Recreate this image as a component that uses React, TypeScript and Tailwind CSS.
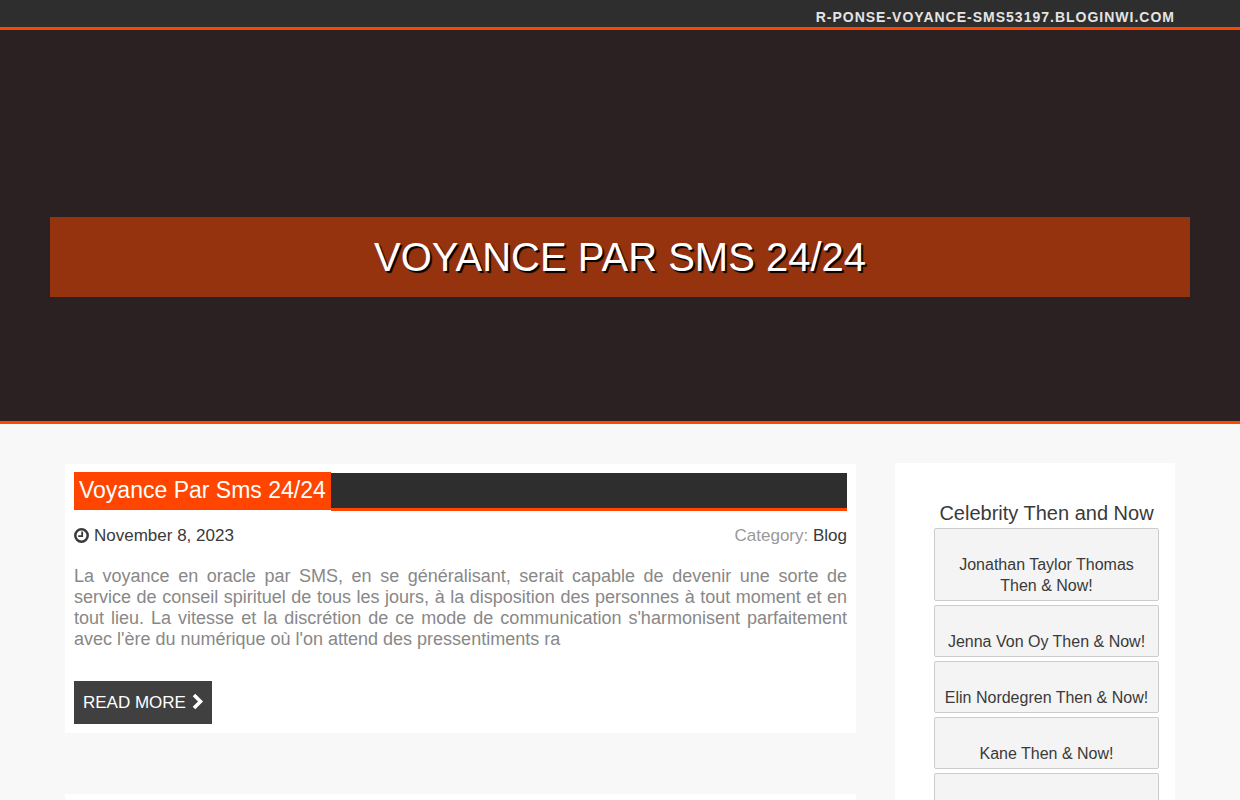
const celebs = [
  { name: "Jonathan Taylor Thomas Then & Now!" },
  { name: "Jenna Von Oy Then & Now!" },
  { name: "Elin Nordegren Then & Now!" },
  { name: "Kane Then & Now!" },
  { name: "" },
]

function CelebCard({ name }: { name: string }) {
  return (
    <div className="mb-[4px] flex min-h-[52px] items-end justify-center rounded-[2px] border border-[#cccccc] bg-[#f4f4f4] px-[8px] pb-[4px] pt-[25px] text-center text-[16px] leading-[21px] text-[#3a3a3a]">
      <span className="block">{name}</span>
    </div>
  )
}

export default function App() {
  return (
    <div className="h-[800px] overflow-hidden bg-[#f8f8f8] font-['Liberation_Sans',Arial,sans-serif]">
      {/* Top bar */}
      <div className="flex h-[30px] justify-end border-b-[3px] border-[#ff4500] bg-[#2e2e2e] pr-[65px]">
        <a className="mt-[9px] text-[14px] font-bold leading-[16px] tracking-[1px] text-[#e4e4e4]">
          R-PONSE-VOYANCE-SMS53197.BLOGINWI.COM
        </a>
      </div>

      {/* Hero */}
      <div className="h-[394px] border-b-[3px] border-[#ff4500] bg-[#2b2122] px-[50px] pt-[187px]">
        <div className="flex h-[80px] w-full items-center justify-center bg-[#96330f]">
          <h1 className="text-[40px] leading-[44px] text-white [text-shadow:2px_2px_1px_#000]">
            VOYANCE PAR SMS 24/24
          </h1>
        </div>
      </div>

      <div className="flex items-start pl-[65px] pt-[39px]">
        {/* Main column */}
        <div className="w-[791px]">
          <div className="mt-[1px] bg-white px-[9px] pb-[9px] pt-[8px]">
            <div className="flex h-[39px] items-start">
              <h2 className="h-[38px] bg-[#ff4500] px-[5px] text-[23px] leading-[36px] text-white">
                Voyance Par Sms 24/24
              </h2>
              <div className="mt-[1px] h-[38px] flex-1 border-b-[3px] border-[#ff4500] bg-[#2e2e2e]" />
            </div>

            <div className="mt-[14px] flex items-center justify-between text-[17px] leading-[21px]">
              <span className="flex items-center text-[#3a3a3a]">
                <svg viewBox="0 0 15 15" className="mr-[5px] h-[15px] w-[15px]" fill="none" stroke="currentColor">
                  <circle cx="7.5" cy="7.5" r="6.2" strokeWidth="2.5" />
                  <path d="M8.2 3.6V8.2H4.2" strokeWidth="1.8" />
                </svg>
                November 8, 2023
              </span>
              <span className="text-[#999999]">
                Category: <span className="text-[#3a3a3a]">Blog</span>
              </span>
            </div>

            <p className="mt-[20px] text-justify text-[18px] leading-[21px] text-[#888888]">
              La voyance en oracle par SMS, en se généralisant, serait capable de devenir une sorte de service de conseil spirituel de tous les jours, à la disposition des personnes à tout moment et en tout lieu. La vitesse et la discrétion de ce mode de communication s'harmonisent parfaitement avec l'ère du numérique où l'on attend des pressentiments ra
            </p>

            <a className="mt-[31px] flex h-[43px] w-[138px] items-center bg-[#404040] pl-[9px] text-[17px] text-white">
              READ MORE
              <svg viewBox="0 0 13 17" className="-mt-[2px] ml-[5px] h-[17px] w-[13px]" fill="none" stroke="currentColor" strokeWidth="3.6">
                <path d="M3 2L9.5 8.5L3 15" />
              </svg>
            </a>
          </div>

          <div className="mt-[61px] h-[200px] bg-white" />
        </div>

        {/* Sidebar */}
        <aside className="ml-[39px] h-[400px] w-[280px] bg-white pl-[39px] pr-[16px] pt-[39px]">
          <h3 className="text-center text-[20px] leading-[23px] text-[#3a3a3a]">
            Celebrity Then and Now
          </h3>
          <div className="mt-[3px]">
            {celebs.map((c, i) => (
              <CelebCard key={i} name={c.name} />
            ))}
          </div>
        </aside>
      </div>
    </div>
  )
}
